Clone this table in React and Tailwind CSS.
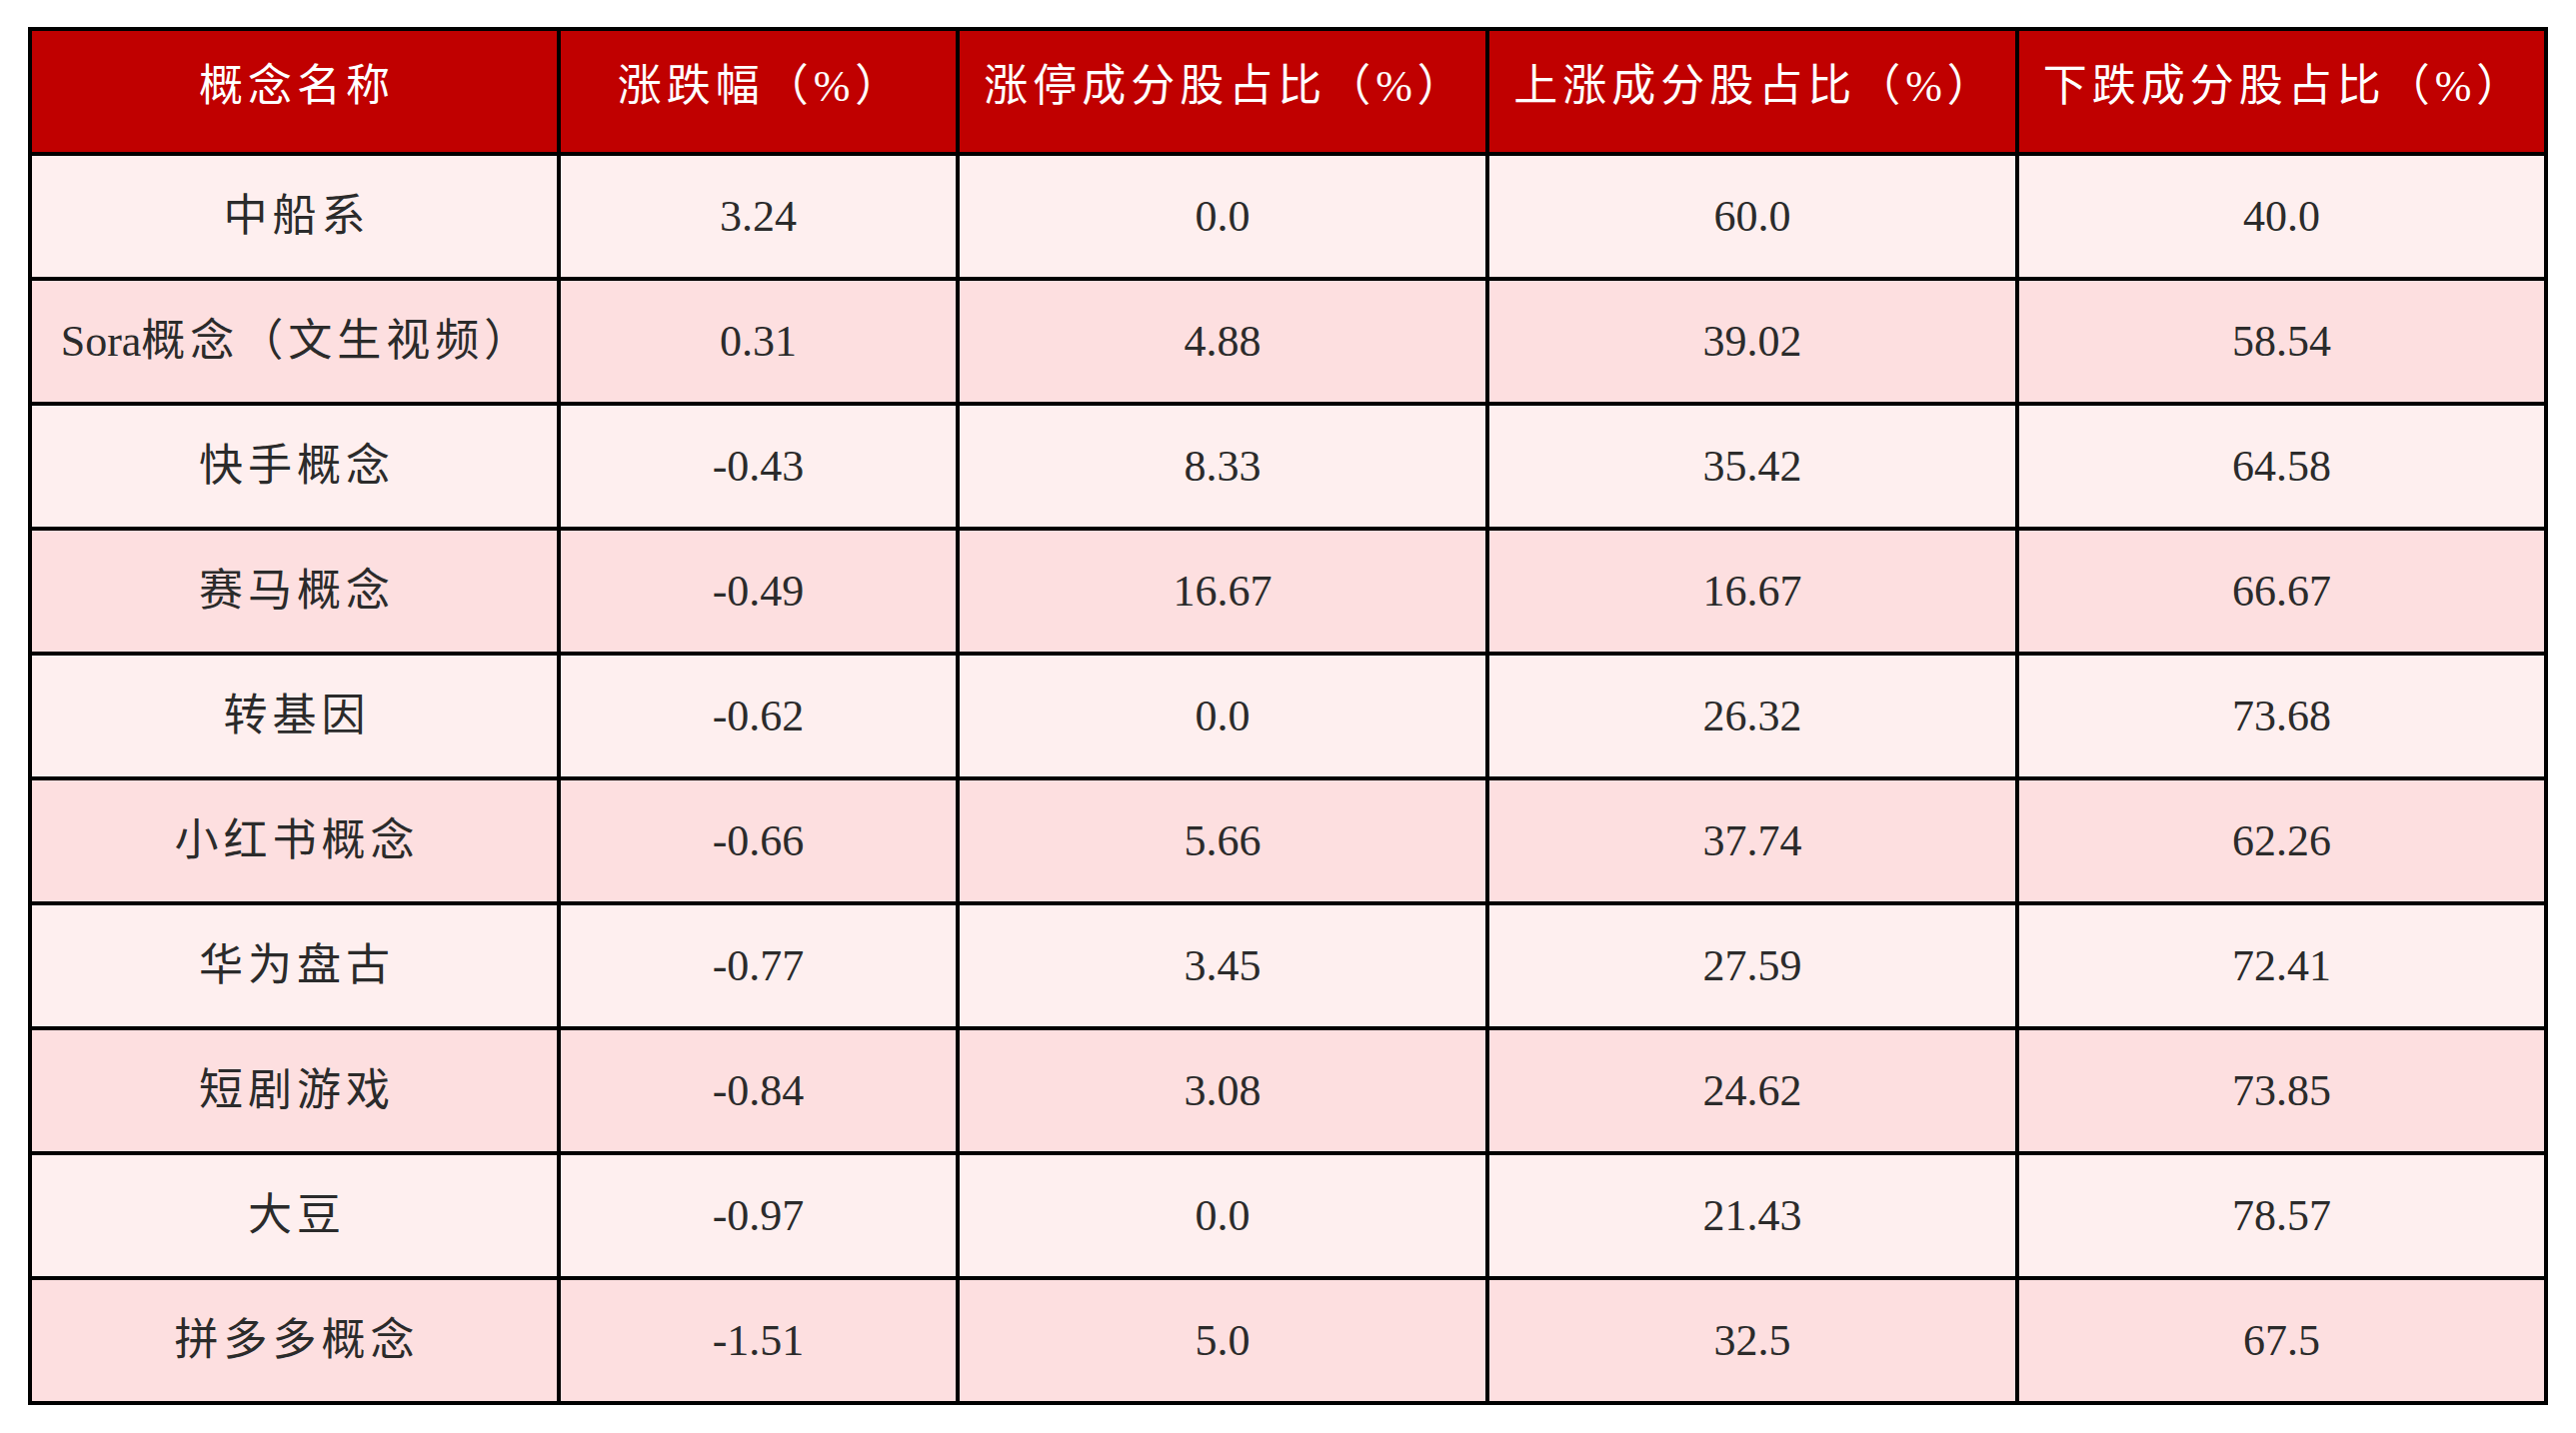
// Concept sector table
import React from "react";

const headers = ["概念名称", "涨跌幅（%）", "涨停成分股占比（%）", "上涨成分股占比（%）", "下跌成分股占比（%）"];

const rows = [
    ["中船系", "3.24", "0.0", "60.0", "40.0"],
    ["Sora概念（文生视频）", "0.31", "4.88", "39.02", "58.54"],
    ["快手概念", "-0.43", "8.33", "35.42", "64.58"],
    ["赛马概念", "-0.49", "16.67", "16.67", "66.67"],
    ["转基因", "-0.62", "0.0", "26.32", "73.68"],
    ["小红书概念", "-0.66", "5.66", "37.74", "62.26"],
    ["华为盘古", "-0.77", "3.45", "27.59", "72.41"],
    ["短剧游戏", "-0.84", "3.08", "24.62", "73.85"],
    ["大豆", "-0.97", "0.0", "21.43", "78.57"],
    ["拼多多概念", "-1.51", "5.0", "32.5", "67.5"],
];

// keep latin letters unspaced, only the CJK part gets the tracking
const NameCell = ({ text }) => {
    if (text.startsWith("Sora")) {
        return (
            <span>
                <span className="tracking-normal">Sora</span>
                {text.slice(4)}
            </span>
        );
    }
    return <span>{text}</span>;
};

const App = () => {
    return (
        <div
            className="min-h-screen bg-white pl-[28px] pt-[27px]"
            style={{ fontFamily: '"Liberation Serif", "Noto Sans CJK SC", serif' }}
        >
            <div className="inline-grid grid-cols-[525px_395px_526px_526px_525px] auto-rows-[121px] gap-[4px] bg-black p-[4px] text-[44px]">
                {/* Header */}
                {headers.map((h) => (
                    <div key={h} className="flex items-center justify-center bg-[#C00000] pb-[10px] pl-[5px] text-white tracking-[5px]">
                        {h}
                    </div>
                ))}

                {/* Body rows */}
                {rows.map((row, i) =>
                    row.map((cell, j) => (
                        <div
                            key={i + "-" + j}
                            className={`flex items-center justify-center text-[#2b2b2b] ${i % 2 === 0 ? "bg-[#FEEFEF]" : "bg-[#FDDFE0]"} ${j === 0 ? "pl-[5px] tracking-[5px]" : ""}`}
                        >
                            {j === 0 ? <NameCell text={cell} /> : cell}
                        </div>
                    ))
                )}
            </div>
        </div>
    );
};

export default App;
